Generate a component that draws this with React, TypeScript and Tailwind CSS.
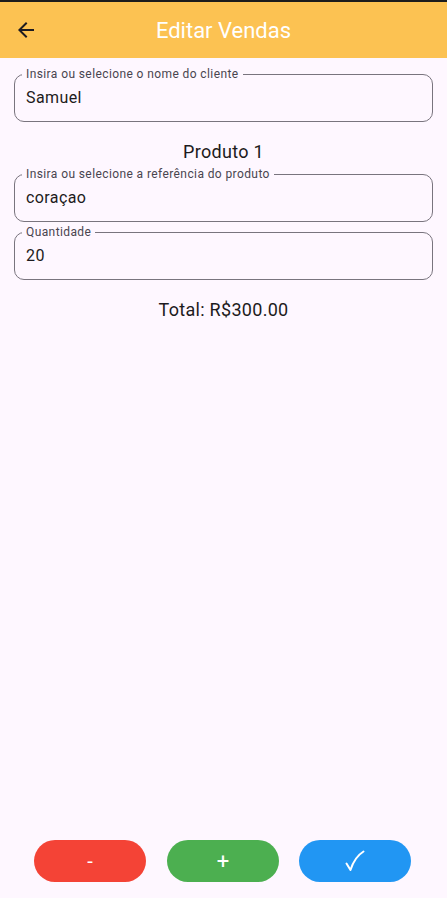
import React from "react";

function Field({ label, value }: { label: string; value: string }) {
  return (
    <div className="relative mx-[14px] h-[48px] rounded-[10px] border border-[#79747E]">
      <span className="absolute left-[7px] top-[-9px] bg-[#FEF7FF] px-[4px] text-[12px] leading-[16px] tracking-[0.4px] text-[#49454F]">
        {label}
      </span>
      <div className="flex h-full items-center pl-[11px] text-[16px] text-[#1D1B20] tracking-[0.4px]">
        {value}
      </div>
    </div>
  );
}

export default function App() {
  return (
    <div
      className="flex h-[898px] w-[447px] flex-col bg-[#FEF7FF]"
      style={{ fontFamily: "Roboto, 'Noto Sans', sans-serif" }}
    >
      <div className="h-[2px] bg-[#1c1c1c]" />
      <div className="relative flex h-[56px] items-center bg-[#FCC252]">
        <svg
          className="absolute left-[14px] top-[16px]"
          width="24"
          height="24"
          viewBox="0 0 24 24"
        >
          <path
            d="M20 11H7.83l5.59-5.59L12 4l-8 8 8 8 1.41-1.41L7.83 13H20v-2z"
            fill="#1D1B20"
          />
        </svg>
        <div className="w-full text-center text-[22px] text-white">Editar Vendas</div>
      </div>
      <div className="h-[16px]" />
      <Field label="Insira ou selecione o nome do cliente" value="Samuel" />
      <div className="mt-[19px] text-center text-[18px] leading-[22px] tracking-[0.3px] text-[#1D1B20]">Produto 1</div>
      <div className="h-[11px]" />
      <Field label="Insira ou selecione a referência do produto" value="coraçao" />
      <div className="h-[10px]" />
      <Field label="Quantidade" value="20" />
      <div className="mt-[19px] text-center text-[18px] leading-[22px] tracking-[0.3px] text-[#1D1B20]">Total: R$300.00</div>
      <div className="flex-1" />
      <div className="mb-[16px] flex pl-[34px]">
        <div className="flex h-[42px] w-[112px] items-center justify-center rounded-full bg-[#F44336] text-[20px] text-white">-</div>
        <div className="ml-[21px] flex h-[42px] w-[112px] items-center justify-center rounded-full bg-[#4CAF50] text-[22px] text-white">+</div>
        <div className="ml-[20px] flex h-[42px] w-[112px] items-center justify-center rounded-full bg-[#2196F3] text-white">
          <svg width="20" height="22" viewBox="0 0 20 22">
            <path
              d="M1.5 13.5 L5.5 20 C8 12 12 5.5 18.5 1.5"
              fill="none"
              stroke="white"
              strokeWidth="2"
              strokeLinecap="round"
              strokeLinejoin="round"
            />
          </svg>
        </div>
      </div>
    </div>
  );
}
